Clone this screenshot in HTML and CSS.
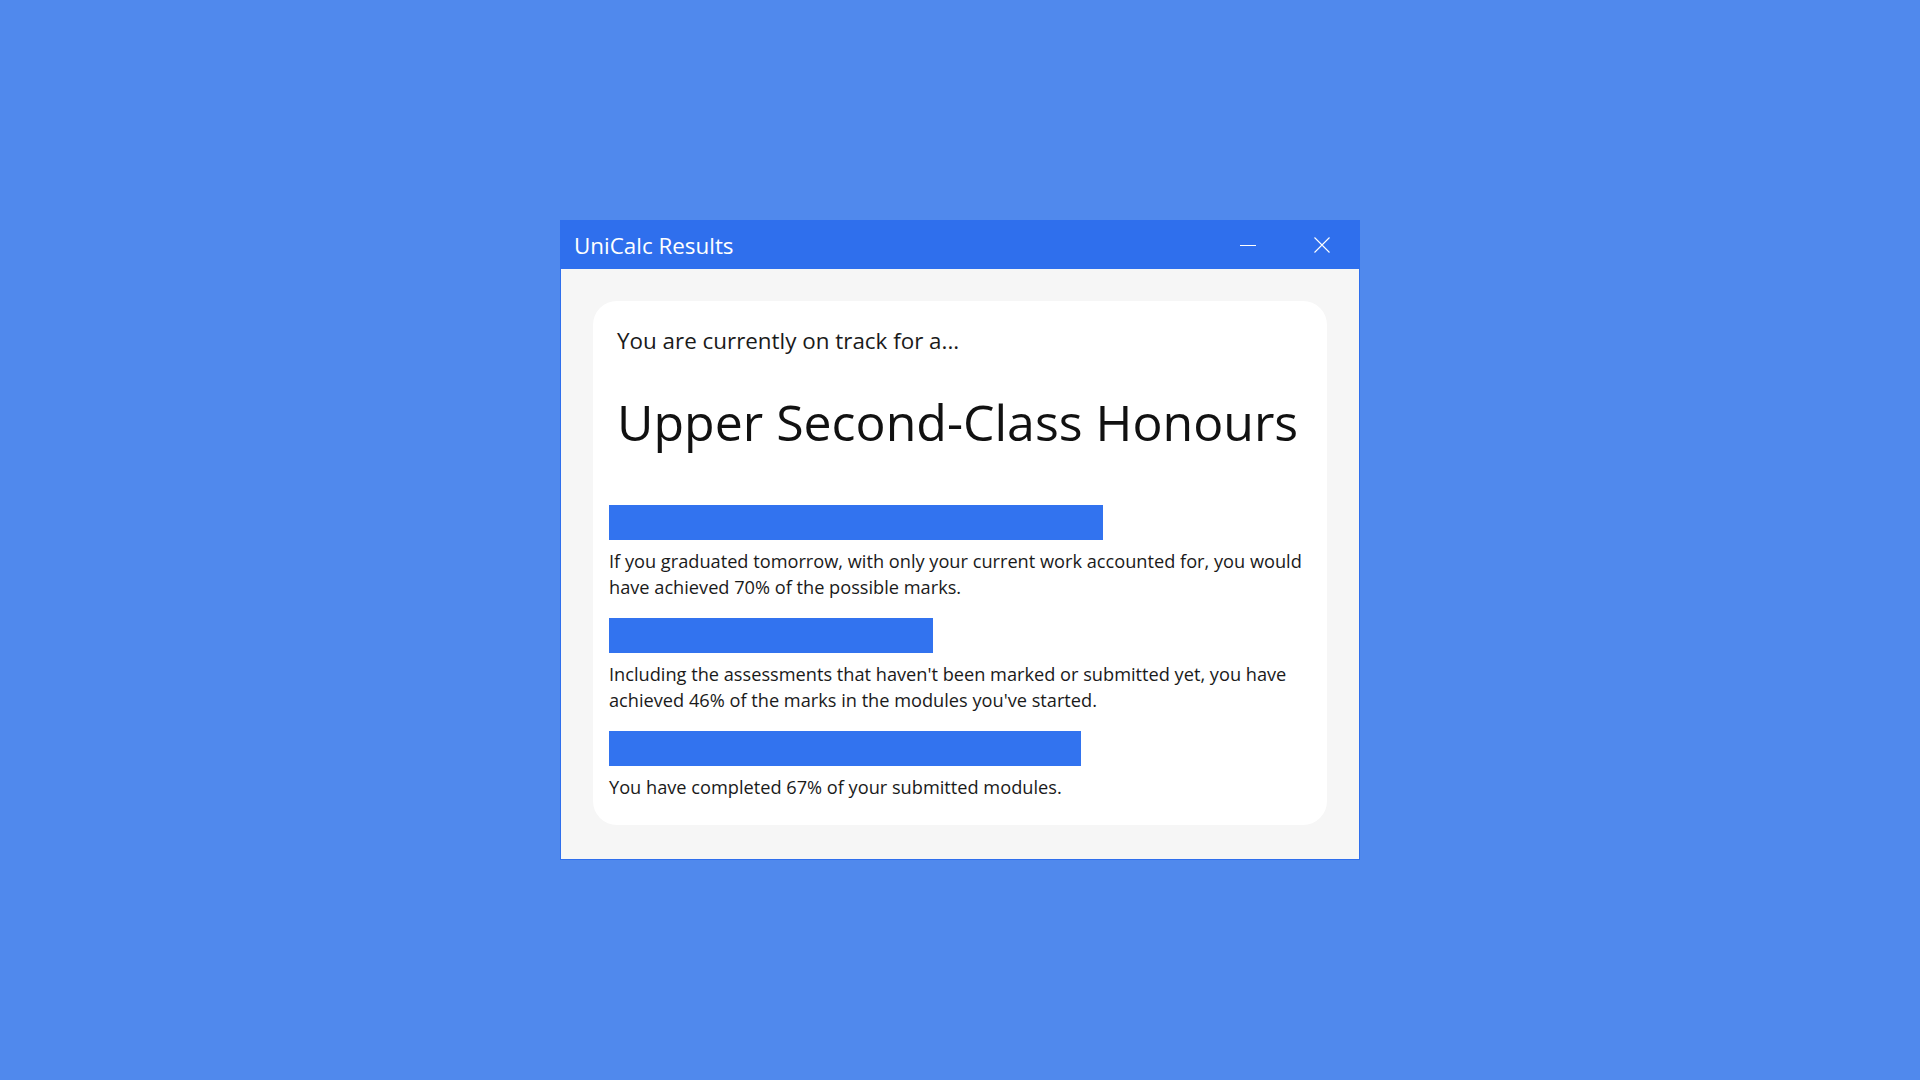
FILE: index.html
```html
<!DOCTYPE html>
<html lang="en">
<head>
    <meta charset="UTF-8">
    <meta name="viewport" content="width=device-width, initial-scale=1.0">
    <title>UniCalc Results</title>
    <link rel="stylesheet" href="styles.css">
</head>
<body>

    <div class="window">
        <div class="titlebar">
            <span class="title">UniCalc Results</span>
            <div class="caption-buttons">
                <button class="caption-btn" title="Minimise">
                    <svg width="16" height="16" viewBox="0 0 16 16"><line x1="0" y1="8.5" x2="16" y2="8.5" stroke="#fff" stroke-width="1"/></svg>
                </button>
                <button class="caption-btn" title="Close">
                    <svg width="16" height="16" viewBox="0 0 16 16"><path d="M0.5 0.5 L15.5 15.5 M15.5 0.5 L0.5 15.5" stroke="#fff" stroke-width="1.1" fill="none"/></svg>
                </button>
            </div>
        </div>

        <div class="window-body">
            <div class="card">
                <p class="intro">You are currently on track for a...</p>
                <h1 class="classification">Upper Second-Class Honours</h1>

                <div class="stats">
                    <div class="stat">
                        <div class="bar" style="width: 70%"></div>
                        <p>If you graduated tomorrow, with only your current work accounted for, you would have achieved 70% of the possible marks.</p>
                    </div>
                    <div class="stat">
                        <div class="bar" style="width: 46%"></div>
                        <p>Including the assessments that haven't been marked or submitted yet, you have achieved 46% of the marks in the modules you've started.</p>
                    </div>
                    <div class="stat">
                        <div class="bar" style="width: 67%"></div>
                        <p>You have completed 67% of your submitted modules.</p>
                    </div>
                </div>
            </div>
        </div>
    </div>

</body>
</html>
```

FILE: styles.css
```css
body {
    font-family: 'Open Sans', 'Noto Sans', sans-serif;
    margin: 0;
    padding: 0;
    background-color: #5089ed;
    color: #1a1a1a;
    display: flex;
    justify-content: center;
    align-items: center;
    min-height: 100vh;
}

/* Window frame */
.window {
    width: 800px;
    height: 640px;
    box-sizing: border-box;
    border: 1px solid #2f6fed;
    display: flex;
    flex-direction: column;
}

.titlebar {
    height: 48px;
    background-color: #2f6fed;
    display: flex;
    align-items: center;
    justify-content: space-between;
}

.title {
    color: #fff;
    font-size: 22.4px;
    padding: 1px 0 0 13px;
}

.caption-buttons {
    display: flex;
    height: 100%;
}

.caption-btn {
    width: 74px;
    height: 100%;
    border: none;
    background: transparent;
    display: flex;
    align-items: center;
    justify-content: center;
    padding: 0;
    cursor: pointer;
}

.caption-btn svg {
    display: block;
}

.window-body {
    flex: 1;
    background-color: #f6f6f6;
    padding: 32px;
}

/* Results card */
.card {
    background-color: #fff;
    border-radius: 24px;
    padding: 26px 13px 25px 16px;
}

.intro {
    margin: 0 0 0 8px;
    font-size: 22.4px;
    line-height: 28px;
    color: #1a1a1a;
}

.classification {
    margin: 37px 0 0 8px;
    font-size: 50px;
    line-height: 60px;
    font-weight: normal;
    color: #111;
}

.stats {
    margin-top: 53px;
    display: flex;
    flex-direction: column;
    gap: 18px;
}

.bar {
    height: 35px;
    background-color: #3273ef;
}

.stat p {
    margin: 8px 0 0 0;
    font-size: 18.2px;
    line-height: 26px;
    color: #1a1a1a;
}
```
